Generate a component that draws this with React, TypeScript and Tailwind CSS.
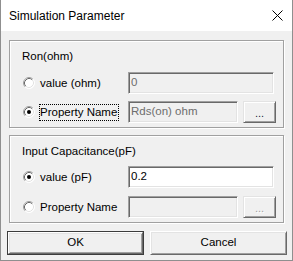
import React from "react";

const font = { fontFamily: '"Liberation Sans", Arial, sans-serif' };

function Radio({ checked }: { checked?: boolean }) {
  return (
    <svg width="12" height="12" viewBox="0 0 12 12" className="shrink-0">
      <circle cx="6" cy="6" r="5.5" fill="#ffffff" />
      <path d="M2.11 9.89 A5.5 5.5 0 0 1 9.89 2.11" fill="none" stroke="#a0a0a0" strokeWidth="1" />
      <path d="M9.89 2.11 A5.5 5.5 0 0 1 2.11 9.89" fill="none" stroke="#ffffff" strokeWidth="1" />
      <path d="M2.82 9.18 A4.5 4.5 0 0 1 9.18 2.82" fill="none" stroke="#696969" strokeWidth="1" />
      <path d="M9.18 2.82 A4.5 4.5 0 0 1 2.82 9.18" fill="none" stroke="#e3e3e3" strokeWidth="1" />
      {checked && <circle cx="6" cy="6" r="2" fill="#000000" />}
    </svg>
  );
}

function Field({
  text,
  enabled,
  wide,
}: {
  text?: string;
  enabled?: boolean;
  wide?: boolean;
}) {
  return (
    <div
      className={`h-[22px] ${wide ? "w-[146px]" : "w-[110px]"} ${
        enabled ? "bg-white text-black" : "bg-[#f0f0f0] text-[#6d6d6d]"
      } border border-t-[#a0a0a0] border-l-[#a0a0a0] border-b-white border-r-white shadow-[inset_1px_1px_0_#696969,inset_-1px_-1px_0_#e3e3e3] flex items-center pl-[2px] text-[11.5px] leading-none`}
    >
      {text}
    </div>
  );
}

function DotsButton({ disabled }: { disabled?: boolean }) {
  return (
    <div
      className={`ml-[5px] h-[22px] w-[33px] bg-[#f0f0f0] border border-t-[#e3e3e3] border-l-[#e3e3e3] border-b-[#696969] border-r-[#696969] shadow-[inset_1px_1px_0_#ffffff,inset_-1px_-1px_0_#a0a0a0] flex items-center justify-center text-[11px] leading-none ${
        disabled ? "text-[#a0a0a0] [text-shadow:1px_1px_0_#ffffff]" : "text-[#1a1a40]"
      }`}
    >
      <span className="pt-[2px]">...</span>
    </div>
  );
}

function Row({
  checked,
  label,
  focused,
  children,
  className,
}: {
  checked?: boolean;
  label: string;
  focused?: boolean;
  children: React.ReactNode;
  className?: string;
}) {
  return (
    <div className={`h-[22px] flex items-center pl-[13px] ${className ?? ""}`}>
      <Radio checked={checked} />
      <div className="w-[93px] pl-[4px] flex items-center">
        <span
          className={`text-[11.5px] leading-[15px] pr-px border ${
            focused ? "border-dotted border-black" : "border-transparent"
          }`}
        >
          {label}
        </span>
      </div>
      {children}
    </div>
  );
}

function Group({ children, className }: { children: React.ReactNode; className?: string }) {
  return (
    <div
      className={`mx-[8px] h-[88px] border border-[#a0a0a0] shadow-[inset_1px_1px_0_#ffffff,1px_1px_0_#ffffff] ${className ?? ""}`}
    >
      {children}
    </div>
  );
}

function Btn({ label, isDefault }: { label: string; isDefault?: boolean }) {
  return (
    <div
      className={`w-[137px] h-[24px] bg-[#f0f0f0] ${
        isDefault ? "border border-[#3c3c3c]" : ""
      }`}
    >
      <div className="w-full h-full border border-t-[#ffffff] border-l-[#ffffff] border-b-[#696969] border-r-[#696969] shadow-[inset_1px_1px_0_#e3e3e3,inset_-1px_-1px_0_#a0a0a0] flex items-center justify-center text-[11.5px] text-black leading-none">
        {label}
      </div>
    </div>
  );
}

export default function App() {
  return (
    <div
      style={font}
      className="w-[293px] h-[261px] bg-[#f0f0f0] border border-t-0 border-[#8f8f8f] flex flex-col text-black"
    >
      <div className="h-[31px] bg-white flex items-center justify-between pl-[8px] pr-[9px]">
        <span className="text-[12px] leading-none pt-[1px]">Simulation Parameter</span>
        <svg width="11" height="11" viewBox="0 0 11 11">
          <path d="M0.5 0.5 L10.5 10.5 M10.5 0.5 L0.5 10.5" stroke="#000" strokeWidth="1" />
        </svg>
      </div>
      <div className="pt-[9px]">
        <Group>
          <div className="pt-[7px] pl-[12px] h-[23px] text-[11.5px] leading-[16px]">Ron(ohm)</div>
          <Row label="value (ohm)" className="mt-[8px]">
            <Field text="0" wide />
          </Row>
          <Row label="Property Name" checked focused className="mt-[7px]">
            <Field text="Rds(on) ohm" />
            <DotsButton />
          </Row>
        </Group>
        <Group className="mt-[7px]">
          <div className="pt-[7px] pl-[12px] h-[23px] text-[11.5px] leading-[16px]">
            Input Capacitance(pF)
          </div>
          <Row label="value (pF)" checked className="mt-[7px]">
            <Field text="0.2" enabled wide />
          </Row>
          <Row label="Property Name" className="mt-[8px]">
            <Field />
            <DotsButton disabled />
          </Row>
        </Group>
        <div className="mt-[8px] pl-[6px] flex gap-[6px]">
          <Btn label="OK" isDefault />
          <Btn label="Cancel" />
        </div>
      </div>
    </div>
  );
}
